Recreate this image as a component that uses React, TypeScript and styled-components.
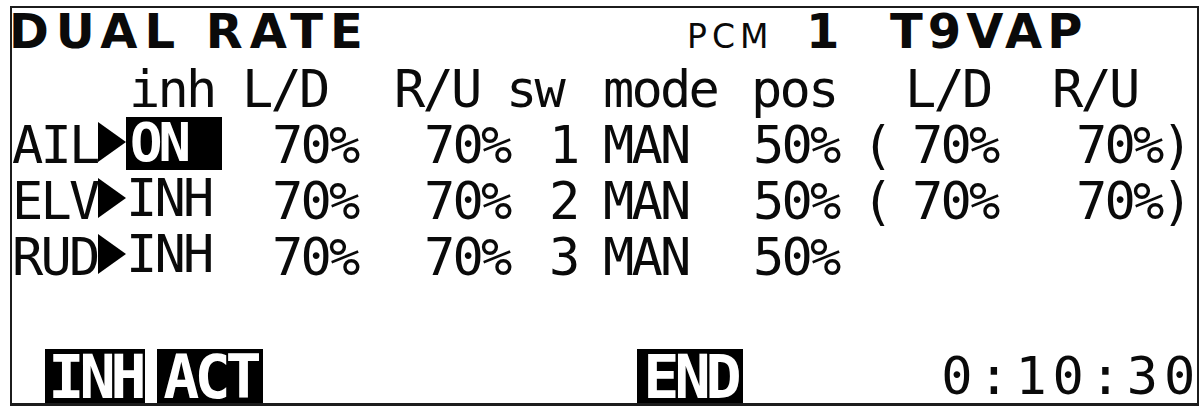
import styled, { createGlobalStyle } from "styled-components";

// Dual rate menu page of an RC transmitter LCD

type Channel = {
  name: string;
  state: string;
  active: boolean;
  ld: string;
  ru: string;
  sw: string;
  mode: string;
  pos: string;
  alt?: [string, string];
};

const channels: Channel[] = [
  { name: "AIL", state: "ON", active: true, ld: "70%", ru: "70%", sw: "1", mode: "MAN", pos: "50%", alt: ["70%", "70%"] },
  { name: "ELV", state: "INH", active: false, ld: "70%", ru: "70%", sw: "2", mode: "MAN", pos: "50%", alt: ["70%", "70%"] },
  { name: "RUD", state: "INH", active: false, ld: "70%", ru: "70%", sw: "3", mode: "MAN", pos: "50%" },
];

const GlobalStyle = createGlobalStyle`
  body {
    margin: 0;
    background: #ffffff;
  }
`;

const Screen = styled.div`
  box-sizing: border-box;
  width: 1189px;
  height: 400px;
  margin: 6px 0 0 10px;
  border: solid #1c1c1c;
  border-width: 2px 2px 3px 2px;
  display: flex;
  flex-direction: column;
  color: #0a0a0a;
  font-family: "DejaVu Sans Mono", "Liberation Mono", monospace;
  font-size: 52px;
  letter-spacing: -2.8px;
  white-space: pre;
`;

const TitleBar = styled.div`
  display: grid;
  grid-template-columns: 675px 119px 84px 1fr;
  align-items: baseline;
  height: 46px;
  line-height: 46px;
`;

const Title = styled.span<{ $spacing?: number }>`
  font-family: "DejaVu Sans", "Liberation Sans", sans-serif;
  font-weight: bold;
  font-size: 48px;
  letter-spacing: ${(p) => p.$spacing ?? 6}px;
`;

const Heading = styled(Title)`
  margin-left: -3px;
`;

const Mode = styled.span`
  font-family: "DejaVu Sans", "Liberation Sans", sans-serif;
  font-size: 33px;
  letter-spacing: 5px;
`;

const Table = styled.div`
  margin-top: 7px;
  display: flex;
  flex-direction: column;
`;

const HeadRow = styled.div`
  display: grid;
  grid-template-columns: 113px 152px 112px 97px 148px 154px 147px 1fr;
  padding-left: 117px;
  height: 56px;
  line-height: 56px;
`;

const DataRow = styled.div`
  display: grid;
  grid-template-columns: 86px 28px 146px 152px 125px 54px 150px 109px 50px 164px 1fr;
  height: 56px;
  line-height: 56px;
`;

const Cursor = styled.svg`
  margin-top: 5px;
  width: 28px;
  height: 40px;
`;

const State = styled.span<{ $active: boolean }>`
  width: 96px;
  height: 53px;
  line-height: 51px;
  background: ${(p) => (p.$active ? "#000000" : "transparent")};
  color: ${(p) => (p.$active ? "#ffffff" : "inherit")};
  font-weight: ${(p) => (p.$active ? "bold" : "normal")};
  font-size: ${(p) => (p.$active ? "54px" : "52px")};
  letter-spacing: ${(p) => (p.$active ? "-4px" : "-2.8px")};
  padding-left: ${(p) => (p.$active ? "4px" : "0")};
  box-sizing: border-box;
`;

const Footer = styled.div`
  margin-top: auto;
  height: 54px;
  display: flex;
  align-items: flex-end;
`;

const SoftKey = styled.span<{ $width: number; $gap: number }>`
  box-sizing: border-box;
  width: ${(p) => p.$width}px;
  height: 54px;
  margin-left: ${(p) => p.$gap}px;
  padding-top: 3px;
  background: #000000;
  color: #ffffff;
  font-weight: bold;
  font-size: 60px;
  letter-spacing: -5px;
  line-height: 51px;
  text-align: center;
`;

const Timer = styled.span`
  margin-left: auto;
  margin-right: -4px;
  letter-spacing: 5.8px;
  line-height: 54px;
`;

const App = () => {
  return (
    <>
      <GlobalStyle />
      <Screen>
        <TitleBar>
          <Heading $spacing={7}>DUAL RATE</Heading>
          <Mode>PCM</Mode>
          <Title>1</Title>
          <Title $spacing={5}>T9VAP</Title>
        </TitleBar>

        <Table>
          <HeadRow>
            <span>inh</span>
            <span>L/D</span>
            <span>R/U</span>
            <span>sw</span>
            <span>mode</span>
            <span>pos</span>
            <span>L/D</span>
            <span>R/U</span>
          </HeadRow>

          {channels.map((c) => (
            <DataRow key={c.name}>
              <span>{c.name}</span>
              <Cursor viewBox="0 0 28 40">
                <polygon points="0,0 28,20 0,40" fill="#000" />
              </Cursor>
              <State $active={c.active}>{c.state}</State>
              <span>{c.ld}</span>
              <span>{c.ru}</span>
              <span>{c.sw}</span>
              <span>{c.mode}</span>
              <span>{c.pos}</span>
              <span>{c.alt ? "(" : ""}</span>
              <span>{c.alt ? c.alt[0] : ""}</span>
              <span>{c.alt ? c.alt[1] + ")" : ""}</span>
            </DataRow>
          ))}
        </Table>

        <Footer>
          <SoftKey $width={100} $gap={33}>INH</SoftKey>
          <SoftKey $width={106} $gap={12}>ACT</SoftKey>
          <SoftKey $width={106} $gap={374}>END</SoftKey>
          <Timer>0:10:30</Timer>
        </Footer>
      </Screen>
    </>
  );
};

export default App;
